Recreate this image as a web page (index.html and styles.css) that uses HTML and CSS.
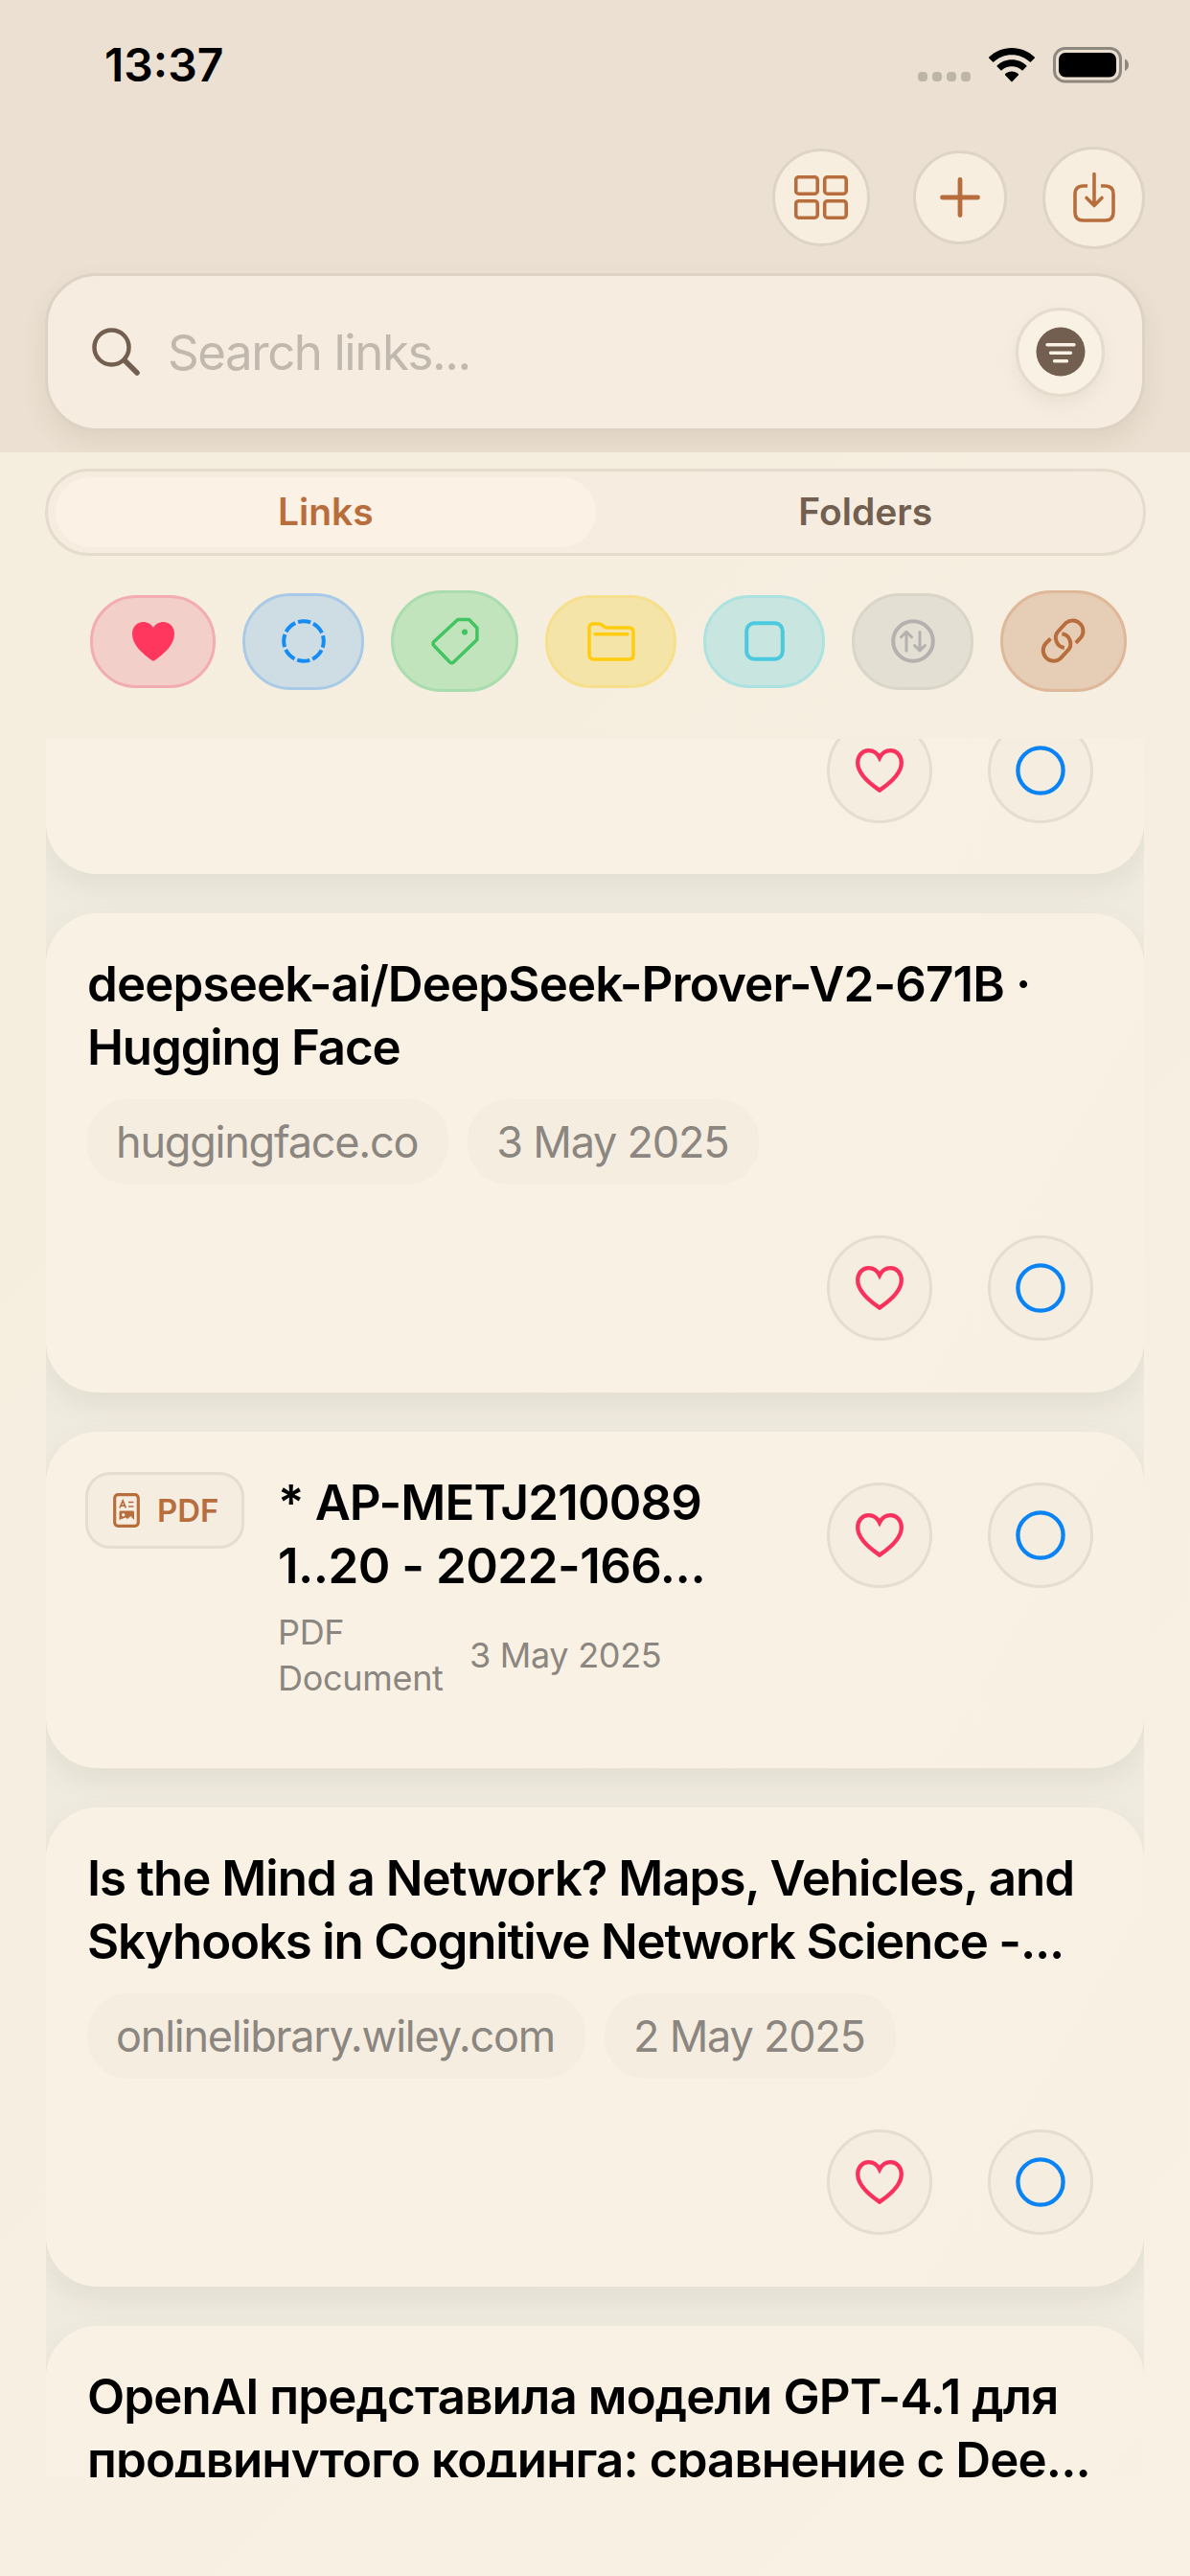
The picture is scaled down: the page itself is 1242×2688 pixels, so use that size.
FILE: index.html
```
<!DOCTYPE html>
<html lang="en">
  <head>
    <meta charset="UTF-8" />
    <meta name="viewport" content="width=device-width, initial-scale=1.0" />
    <title>Links</title>
    <link rel="stylesheet" href="styles.css" />
  </head>
  <body>
    <svg class="icon-defs" width="0" height="0">
      <symbol id="icon-heart" viewBox="0 0 50 46">
        <path d="M25 43.6C13 35.5 2.2 26 2.2 15 2.2 7.5 7 2.2 13.6 2.2c5 0 9 2.8 11.4 7.6 2.4-4.8 6.4-7.6 11.4-7.6 6.6 0 11.4 5.3 11.4 12.8 0 11-10.8 20.5-22.8 28.6z" />
      </symbol>
      <symbol id="icon-circle" viewBox="0 0 52 52">
        <circle cx="26" cy="26" r="23.6" />
      </symbol>
    </svg>

    <header class="header">
      <div class="status-bar">
        <span class="status-time">13:37</span>
        <div class="status-icons">
          <div class="status-dots"><i></i><i></i><i></i><i></i></div>
          <svg class="status-wifi" width="48" height="36" viewBox="0 0 48 36">
            <path d="M24 0C14.8 0 6.4 3.6.3 9.5a.9.9 0 0 0 0 1.3l3.7 3.7a.9.9 0 0 0 1.3 0C10.2 9.9 16.8 7.2 24 7.2s13.8 2.7 18.7 7.3a.9.9 0 0 0 1.3 0l3.7-3.7a.9.9 0 0 0 0-1.3C41.6 3.6 33.2 0 24 0z" />
            <path d="M24 12.2c-5.9 0-11.3 2.3-15.3 6a.9.9 0 0 0 0 1.3l3.7 3.7a.9.9 0 0 0 1.2 0c2.7-2.4 6.4-3.9 10.4-3.9s7.7 1.5 10.4 3.9a.9.9 0 0 0 1.2 0l3.7-3.7a.9.9 0 0 0 0-1.3c-4-3.7-9.4-6-15.3-6z" />
            <path d="M24 24.5c-2.6 0-5 1-6.8 2.6a.9.9 0 0 0 0 1.3l6.2 6.7a.9.9 0 0 0 1.2 0l6.2-6.7a.9.9 0 0 0 0-1.3c-1.8-1.6-4.2-2.6-6.8-2.6z" />
          </svg>
          <svg class="status-battery" width="80" height="38" viewBox="0 0 80 38">
            <rect x="1.5" y="1.5" width="69" height="34.5" rx="11" fill="none" stroke="#8f887f" stroke-width="3" />
            <rect x="6" y="6" width="60" height="25.5" rx="7" fill="#000" />
            <path d="M75 12.5c2.5 1 4 3.5 4 6.2s-1.5 5.2-4 6.2z" fill="#8f887f" />
          </svg>
        </div>
      </div>

      <div class="toolbar">
        <button class="round-btn round-btn-grid">
          <svg width="56" height="46" viewBox="0 0 56 46">
            <rect x="1.7" y="1.7" width="22.5" height="17.5" rx="3" />
            <rect x="31.7" y="1.7" width="22.5" height="17.5" rx="3" />
            <rect x="1.7" y="26.7" width="22.5" height="17.5" rx="3" />
            <rect x="31.7" y="26.7" width="22.5" height="17.5" rx="3" />
          </svg>
        </button>
        <button class="round-btn round-btn-add">
          <svg width="42" height="42" viewBox="0 0 42 42">
            <path d="M21 2.5v37M2.5 21h37" stroke-width="4.8" />
          </svg>
        </button>
        <button class="round-btn round-btn-save">
          <svg width="44" height="54" viewBox="0 0 44 54">
            <path d="M15 15H10.5C5 15 2 18 2 23.5v19C2 48 5 51 10.5 51h23C39 51 42 48 42 42.5v-19C42 18 39 15 33.5 15H29" stroke-linecap="butt" />
            <path d="M22 2.5v33M14 27.500l8 8 8-8" />
          </svg>
        </button>
      </div>

      <div class="search">
        <svg class="search-icon" width="50" height="50" viewBox="0 0 50 50">
          <circle cx="20.5" cy="20.5" r="18" />
          <path d="M34 34l13 13" stroke-width="5.5" />
        </svg>
        <span class="search-placeholder">Search links...</span>
        <button class="filter-btn">
          <svg width="52" height="52" viewBox="0 0 52 52">
            <circle cx="26" cy="26" r="25.5" fill="#725f50" />
            <path d="M12 18.7h28M15.5 27.2h21M19.5 35.7h13" stroke="#f9f1e4" stroke-width="3.4" stroke-linecap="round" />
          </svg>
        </button>
      </div>
    </header>

    <nav class="segmented">
      <a class="segment is-active">Links</a>
      <a class="segment">Folders</a>
    </nav>

    <div class="filters">
      <div class="chip chip-heart">
        <svg width="44" height="41" viewBox="0 0 44 41">
          <path d="M22 41C10 33 0 23.5 0 12.5 0 5.2 5 0 11.5 0 16 0 20 2.3 22 6c2-3.7 6-6 10.5-6C39 0 44 5.2 44 12.5 44 23.5 34 33 22 41z" fill="#ff375f" />
        </svg>
      </div>
      <div class="chip chip-status">
        <svg width="46" height="46" viewBox="0 0 46 46">
          <circle cx="23" cy="23" r="20.8" stroke-dasharray="13.34 2.997" stroke-dashoffset="6.67" />
        </svg>
      </div>
      <div class="chip chip-tag">
        <svg width="50" height="50" viewBox="0 0 50 50">
          <path d="M27.8 2.5h11.8l8.3 8.8v12.2L23.6 46.8c-1.3 1.2-3 1.2-4.3 0L3 29.8c-1.2-1.3-1.2-3 0-4.3z" />
          <circle cx="35" cy="15.5" r="3.1" fill="#43c463" stroke="none" />
        </svg>
      </div>
      <div class="chip chip-folder">
        <svg width="50" height="41" viewBox="0 0 50 41">
          <path d="M2 34.5V6c0-2.7 1.5-4 4-4h6c2 0 2.8.5 4.2 1.8l1 .9c1.1 1 1.9 1.3 3.4 1.3H43.5c2.8 0 4.5 1.7 4.5 4.5v24c0 2.8-1.7 4.5-4.5 4.5h-37C3.7 39 2 37.3 2 34.5zM8 12.7h34" />
        </svg>
      </div>
      <div class="chip chip-square">
        <svg width="42" height="42" viewBox="0 0 42 42">
          <rect x="2.2" y="2.2" width="37.6" height="37.6" rx="8" />
        </svg>
      </div>
      <div class="chip chip-sort">
        <svg width="46" height="46" viewBox="0 0 46 46">
          <circle cx="23" cy="23" r="20.8" />
          <path stroke-width="3" d="M16 33V13.5M10.5 18.8l5.5-5.5 5.5 5.5M30 13.5V33M24.5 27.5l5.5 5.5 5.5-5.5" />
        </svg>
      </div>
      <div class="chip chip-link">
        <svg width="48" height="48" viewBox="0 0 48 48">
          <path d="M36.8 25.8L42.2 20.2A11 11 0 0 0 26.5 5L19 13.2A10.5 10.5 0 0 0 24.8 31" />
          <path d="M10.4 21.4L5 27A11 11 0 0 0 20.7 42.2L28.2 34A10.5 10.5 0 0 0 22.4 16.2" />
        </svg>
      </div>
    </div>

    <main class="list">
      <article class="card card-first">
        <div class="actions">
          <button class="action action-fav"><svg width="50" height="46"><use href="#icon-heart" /></svg></button>
          <button class="action action-read"><svg width="52" height="52"><use href="#icon-circle" /></svg></button>
        </div>
      </article>

      <article class="card">
        <h2 class="title"><span class="wide">deepseek-ai/DeepSeek-Prover-V2-671B ·</span><br /><span class="tight">Hugging Face</span></h2>
        <div class="tags">
          <span class="tag">huggingface.co</span>
          <span class="tag">3 May 2025</span>
        </div>
        <div class="actions">
          <button class="action action-fav"><svg width="50" height="46"><use href="#icon-heart" /></svg></button>
          <button class="action action-read"><svg width="52" height="52"><use href="#icon-circle" /></svg></button>
        </div>
      </article>

      <article class="card card-pdf">
        <div class="pdf-badge">
          <svg width="28" height="36" viewBox="0 0 28 36">
            <rect x="1.7" y="1.7" width="24.6" height="32.6" rx="3.5" fill="none" stroke="#b86e3c" stroke-width="3.2" />
            <path d="M7 15.5L10.2 8l3.2 7.5M8.2 13.2h4M16 9.5h5.500M16 14h5.500" fill="none" stroke="#b86e3c" stroke-width="1.7" />
            <path fill-rule="evenodd" d="M8 18.5h12.500c1 0 1.500.5 1.500 1.500v8l-3.500-4-3.500 3-2-1.500-6.500 2.500v-8c0-1 .5-1.500 1.500-1.500zM10.700 21a1.700 1.700 0 1 0 0 3.400 1.700 1.700 0 0 0 0-3.400z" fill="#b86e3c" />
          </svg>
          <span>PDF</span>
        </div>
        <div class="pdf-body">
          <h2 class="title"><span class="wide">* AP-METJ210089</span><br /><span class="wider">1..20 - 2022-166...</span></h2>
          <div class="pdf-meta">
            <span class="pdf-kind">PDF Document</span>
            <span>3 May 2025</span>
          </div>
        </div>
        <div class="actions">
          <button class="action action-fav"><svg width="50" height="46"><use href="#icon-heart" /></svg></button>
          <button class="action action-read"><svg width="52" height="52"><use href="#icon-circle" /></svg></button>
        </div>
      </article>

      <article class="card">
        <h2 class="title">Is the Mind a Network? Maps, Vehicles, and<br /><span class="tight">Skyhooks in Cognitive Network Science -...</span></h2>
        <div class="tags">
          <span class="tag">onlinelibrary.wiley.com</span>
          <span class="tag">2 May 2025</span>
        </div>
        <div class="actions">
          <button class="action action-fav"><svg width="50" height="46"><use href="#icon-heart" /></svg></button>
          <button class="action action-read"><svg width="52" height="52"><use href="#icon-circle" /></svg></button>
        </div>
      </article>

      <article class="card">
        <h2 class="title wide" lang="ru">OpenAI представила модели GPT-4.1 для<br />продвинутого кодинга: сравнение с Dee...</h2>
      </article>
    </main>
  </body>
</html>
```
FILE: styles.css
```
* {
  box-sizing: border-box;
}

body {
  margin: 0;
  width: 1242px;
  height: 2688px;
  overflow: hidden;
  background: linear-gradient(135deg, #f5eddd 0%, #f6eee0 50%, #f9f1e3 100%);
  font-family: Inter, 'Liberation Sans', sans-serif;
  color: #000;
}

button {
  padding: 0;
  font: inherit;
}

svg {
  display: block;
  flex: none;
}

.icon-defs {
  position: absolute;
}

/* header */
.header {
  height: 472px;
  padding: 0 47px;
  background: #ebe0d1;
  overflow: hidden;
}

.status-bar {
  display: flex;
  justify-content: space-between;
  align-items: center;
  height: 136px;
  padding: 0 16px 0 62px;
}

.status-time {
  margin-top: -2px;
  font-size: 48px;
  font-weight: 600;
}

.status-icons {
  display: flex;
  align-items: center;
}

.status-dots {
  display: flex;
  gap: 5px;
  margin: 24px 19px 0 0;
}

.status-dots i {
  width: 10px;
  height: 10px;
  border-radius: 4px;
  background: #beb5a9;
}

.status-wifi {
  margin-right: 19px;
}

.toolbar {
  display: flex;
  justify-content: flex-end;
  align-items: center;
  height: 140px;
}

.round-btn {
  display: flex;
  align-items: center;
  justify-content: center;
  border: 3px solid #ded4c5;
  border-radius: 50%;
  background: #f7eee0;
}

.round-btn svg {
  fill: none;
  stroke: #b86e3c;
  stroke-width: 3.6;
  stroke-linecap: round;
  stroke-linejoin: round;
}

.round-btn-grid {
  width: 102px;
  height: 102px;
  margin-right: 45px;
}

.round-btn-add {
  width: 98px;
  height: 98px;
  margin-right: 37px;
}

.round-btn-save {
  width: 107px;
  height: 107px;
}

.search {
  display: flex;
  align-items: center;
  height: 165px;
  margin-top: 8.5px;
  padding: 0 39px 0 46px;
  border: 3px solid #ddd2c3;
  border-radius: 54px;
  background: #f6ede0;
  box-shadow: 0 12px 24px rgba(114, 95, 80, 0.1);
}

.search-icon {
  fill: none;
  stroke: #725f50;
  stroke-width: 4.5;
  stroke-linecap: round;
}

.search-placeholder {
  flex: 1;
  margin-left: 29px;
  font-size: 51px;
  letter-spacing: -1.45px;
  color: #c1b8ae;
}

.filter-btn {
  display: flex;
  align-items: center;
  justify-content: center;
  width: 93px;
  height: 93px;
  border: 3px solid #e5dccd;
  border-radius: 50%;
  background: #f9f1e4;
  box-shadow: 0 9px 18px rgba(114, 95, 80, 0.08);
}

.filter-btn svg {
  fill: none;
}

/* Links / Folders */
.segmented {
  display: flex;
  height: 91px;
  margin: 17px 46px 0 47px;
  padding: 6px 8px;
  border: 3px solid #e5dccd;
  border-radius: 46px;
  background: #f6ede0;
}

.segment {
  flex: 1;
  border-radius: 37px;
  font-size: 39px;
  font-weight: 600;
  line-height: 71px;
  text-align: center;
  color: #725f50;
}

.segment.is-active {
  background: #fbf1e4;
  color: #b86e3c;
}

/* filter chips */
.filters {
  display: flex;
  align-items: center;
  gap: 28px;
  height: 106px;
  margin: 36px 0 49px;
  padding-left: 94px;
}

.chip {
  display: flex;
  flex: none;
  align-items: center;
  justify-content: center;
  width: 127px;
  height: 97px;
  border: 3px solid;
  border-radius: 48px;
}

.chip svg {
  fill: none;
  stroke-width: 4;
  stroke-linecap: round;
  stroke-linejoin: round;
}

.chip-heart {
  width: 131px;
  border-color: #f3acb1;
  background: #f3cfc9;
}

.chip-status {
  height: 101px;
  border-radius: 50px;
  border-color: #a8cae6;
  background: #cddde3;
}

.chip-status svg {
  stroke: #158cf5;
  stroke-linecap: butt;
}

.chip-tag {
  width: 133px;
  height: 106px;
  border-radius: 53px;
  border-color: #a9dcae;
  background: #c1e4bc;
}

.chip-tag svg {
  stroke: #43c463;
  stroke-width: 3.5;
}

.chip-folder {
  width: 137px;
  border-color: #f7e08d;
  background: #f5e4a8;
}

.chip-folder svg {
  stroke: #ffcc0f;
  stroke-width: 3.5;
}

.chip-square {
  border-color: #ace3e1;
  background: #c8e5df;
}

.chip-square svg {
  stroke: #4bc9df;
}

.chip-sort {
  height: 101px;
  border-radius: 50px;
  border-color: #dad5c9;
  background: #e3dfd2;
}

.chip-sort svg {
  stroke: #b4b1ae;
}

.chip-link {
  width: 132px;
  height: 106px;
  border-radius: 53px;
  border-color: #dfb799;
  background: #e6cdb5;
}

.chip-link svg {
  stroke: #b86e3c;
  stroke-linecap: butt;
}

/* list */
.list {
  height: 1814px;
  margin: 0 48px;
  overflow: hidden;
  background: #f0ebdf;
}

.card {
  display: flow-root;
  height: 500px;
  margin-bottom: 41px;
  padding: 41px 53px 53px 43px;
  border-radius: 54px;
  background: linear-gradient(120deg, #f9f2e4, #f9f0e4);
  box-shadow: 0 12px 30px rgba(90, 90, 70, 0.09);
}

.card-first {
  height: 141px;
  padding-top: 0;
  border-radius: 0 0 54px 54px;
}

.title {
  margin: 0;
  font-size: 51px;
  font-weight: 600;
  line-height: 66px;
  letter-spacing: -1px;
  white-space: nowrap;
}

.wide {
  letter-spacing: -0.87px;
}

.wider {
  letter-spacing: -0.5px;
}

.tight {
  letter-spacing: -1.17px;
}

.tags {
  display: flex;
  gap: 20px;
  margin-top: 21px;
}

.tag {
  height: 89px;
  padding: 0 32px 0 30px;
  border-radius: 42px;
  background: #f6ede1;
  font-size: 45px;
  line-height: 89px;
  letter-spacing: -1.22px;
  white-space: nowrap;
  color: #8b8680;
}

.actions {
  display: flex;
  justify-content: flex-end;
  gap: 58px;
  margin-top: 53px;
}

.card-first .actions {
  margin-top: -22px;
}

.action {
  display: flex;
  align-items: center;
  justify-content: center;
  width: 110px;
  height: 110px;
  border: 3px solid #e6ddd0;
  border-radius: 50%;
  background: #f6ede1;
}

.action svg {
  fill: none;
  stroke-width: 4.3;
}

.action-fav svg {
  stroke: #f8325d;
}

.action-read svg {
  stroke: #0a84f5;
}

.card-pdf {
  display: flex;
  align-items: flex-start;
  height: 351px;
  padding: 0 53px 0 41px;
}

.pdf-badge {
  display: flex;
  align-items: center;
  flex: none;
  width: 166px;
  height: 80px;
  margin-top: 42px;
  padding-left: 26px;
  border: 3px solid #e6ddd0;
  border-radius: 26px;
  background: #f6ede1;
  font-size: 33px;
  font-weight: 600;
  color: #b86e3c;
}

.pdf-badge span {
  margin-left: 18px;
}

.pdf-body {
  flex: 1;
  margin: 41px 0 0 35px;
}

.pdf-meta {
  display: flex;
  align-items: center;
  gap: 27px;
  margin-top: 12px;
  font-size: 36px;
  line-height: 48px;
  letter-spacing: -0.3px;
  color: #8b8680;
}

.pdf-kind {
  width: 173px;
}

.card-pdf .actions {
  margin-top: 53px;
}
```
